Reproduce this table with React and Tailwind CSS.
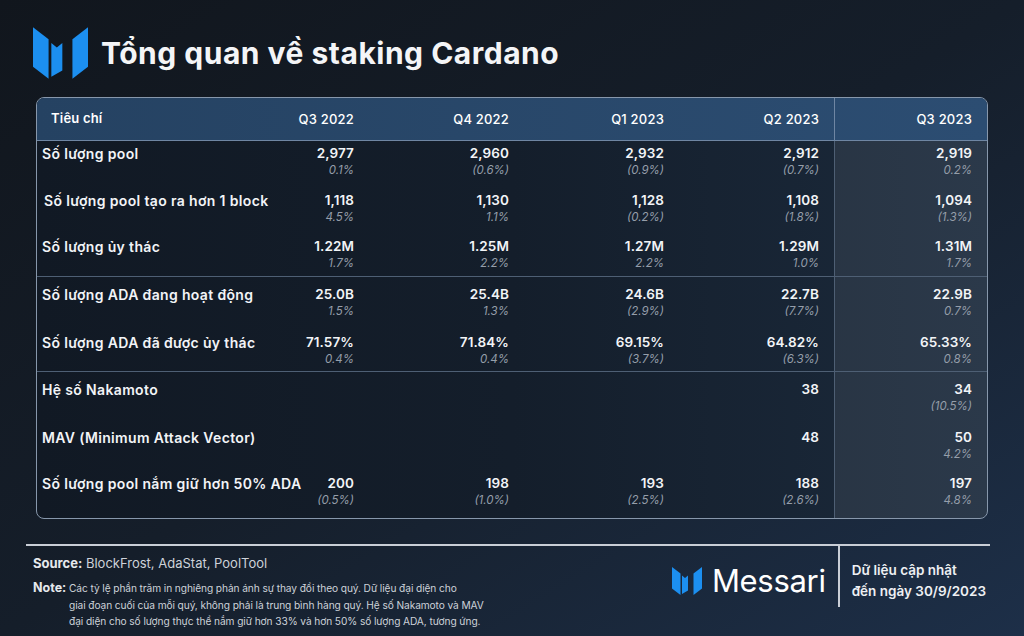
import React from 'react';

const rows = [
  { label: 'Số lượng pool', vals: [['2,977', '0.1%'], ['2,960', '(0.6%)'], ['2,932', '(0.9%)'], ['2,912', '(0.7%)'], ['2,919', '0.2%']], h: 'h-[46px] pt-[4px]' },
  { label: 'Số lượng pool tạo ra hơn 1 block', vals: [['1,118', '4.5%'], ['1,130', '1.1%'], ['1,128', '(0.2%)'], ['1,108', '(1.8%)'], ['1,094', '(1.3%)']], h: 'h-[46px] pt-[5px]', indent: true },
  { label: 'Số lượng ủy thác', vals: [['1.22M', '1.7%'], ['1.25M', '2.2%'], ['1.27M', '2.2%'], ['1.29M', '1.0%'], ['1.31M', '1.7%']], h: 'h-[43px] pt-[5px]', divider: true },
  { label: 'Số lượng ADA đang hoạt động', vals: [['25.0B', '1.5%'], ['25.4B', '1.3%'], ['24.6B', '(2.9%)'], ['22.7B', '(7.7%)'], ['22.9B', '0.7%']], h: 'h-[48px] pt-[9px]' },
  { label: 'Số lượng ADA đã được ủy thác', vals: [['71.57%', '0.4%'], ['71.84%', '0.4%'], ['69.15%', '(3.7%)'], ['64.82%', '(6.3%)'], ['65.33%', '0.8%']], h: 'h-[46px] pt-[9px]', divider: true },
  { label: 'Hệ số Nakamoto', vals: [['', ''], ['', ''], ['', ''], ['38', ''], ['34', '(10.5%)']], h: 'h-[48px] pt-[9px]' },
  { label: 'MAV (Minimum Attack Vector)', vals: [['', ''], ['', ''], ['', ''], ['48', ''], ['50', '4.2%']], h: 'h-[47px] pt-[9px]' },
  { label: 'Số lượng pool nắm giữ hơn 50% ADA', vals: [['200', '(0.5%)'], ['198', '(1.0%)'], ['193', '(2.5%)'], ['188', '(2.6%)'], ['197', '4.8%']], h: 'h-[51px] pt-[8px]' },
];

const quarters = ['Q3 2022', 'Q4 2022', 'Q1 2023', 'Q2 2023', 'Q3 2023'];

function Logo({ className }) {
  return (
    <svg viewBox="0 0 60 56" className={className} fill="#1c8ff0">
      <polygon points="0,0 17,13 17,56 0,43" />
      <polygon points="20,17 26,22 32,17 32,47 20,54" />
      <polygon points="43,13 60,0 60,43 43,56" />
    </svg>
  );
}

export default function App() {
  return (
    <div className="w-[1024px] h-[636px] overflow-hidden bg-gradient-to-br from-[#11161d] via-[#151e2a] to-[#1d2f48] font-['Inter',sans-serif] text-white">
      {/* title */}
      <div className="flex items-center gap-[13px] pl-[33px] pt-[27px]">
        <Logo className="w-[55px] h-[52px]" />
        <h1 className="text-[30px] font-bold tracking-[0.5px] text-[#f4f5f7] leading-none">Tổng quan về staking Cardano</h1>
      </div>

      {/* table */}
      <div className="mx-9 mt-[18px] rounded-lg border border-[#8797ab] overflow-hidden bg-gradient-to-r from-[#111924] via-[#141e2b] to-[#1b2a3c]">
        <div className="grid grid-cols-[177px_155px_155px_155px_155px_1fr] h-[43px] border-b border-[#6f86a3] bg-gradient-to-r from-[#254262] to-[#2c4d72]">
          <div className="pl-[14px] pt-[11px] text-[13px] font-semibold tracking-[0.2px]">Tiêu chí</div>
          {quarters.map((q, i) => (
            <div key={q} className={`flex justify-end pr-[15px] pt-[12px] text-[13px] font-medium tracking-[0.2px] ${i === 4 ? 'border-l border-[#6f86a3]' : ''}`}>{q}</div>
          ))}
        </div>
        {rows.map((r) => (
          <div key={r.label} className={`grid grid-cols-[177px_155px_155px_155px_155px_1fr] ${r.divider ? 'border-b border-[#4e5f74]' : ''}`}>
            <div className={`${r.h} ${r.indent ? 'pl-[7px]' : 'pl-[5px]'} whitespace-nowrap text-[14px] tracking-[0.35px] leading-[17px] font-semibold text-[#f2f4f7]`}>{r.label}</div>
            {r.vals.map((v, i) => (
              <div key={i} className={`${r.h} ${i === 4 ? 'border-l border-[#4e5f74] bg-white/[0.07]' : ''} flex flex-col items-end pr-[15px]`}>
                <span className="text-[13.5px] leading-[17px] font-semibold tracking-[0.1px] text-[#f2f4f7]">{v[0]}</span>
                <span className="text-[11.5px] leading-[17px] italic text-[#959eaa]">{v[1]}</span>
              </div>
            ))}
          </div>
        ))}
      </div>

      {/* footer */}
      <div className="ml-[26px] mr-[34px] mt-[25px] border-t-2 border-[#c9ced6] flex">
        <div className="flex-1 pl-[7px] pt-[9px] text-[13px] leading-[17px] text-[#cdd2d9]">
          <div><span className="font-bold text-[#e6e9ed]">Source:</span> BlockFrost, AdaStat, PoolTool</div>
          <div className="flex mt-[7px]">
            <span className="font-bold text-[#e6e9ed] w-[36px] shrink-0 text-[12.5px]">Note:</span>
            <div className="text-[10.2px] tracking-[-0.1px] leading-[16.5px] pt-[1px]">
              Các tỷ lệ phần trăm in nghiêng phản ánh sự thay đổi theo quý. Dữ liệu đại diện cho<br />
              giai đoạn cuối của mỗi quý, không phải là trung bình hàng quý. Hệ số Nakamoto và MAV<br />
              đại diện cho số lượng thực thể nắm giữ hơn 33% và hơn 50% số lượng ADA, tương ứng.
            </div>
          </div>
        </div>
        <div className="flex items-start pr-[4px]">
          <div className="flex items-center gap-[10px] pt-[19px]">
            <Logo className="w-[30px] h-[28px]" />
            <span className="text-[31px] leading-none font-normal text-white tracking-[-0.3px]">Messari</span>
          </div>
          <div className="w-[2px] h-[61px] bg-[#c9ced6] ml-[12px]" />
          <div className="pl-[12px] pt-[14px] text-[13.5px] leading-[21px] font-semibold text-[#eef0f3]">
            <div>Dữ liệu cập nhật</div>
            <div>đến ngày 30/9/2023</div>
          </div>
        </div>
      </div>
    </div>
  );
}
